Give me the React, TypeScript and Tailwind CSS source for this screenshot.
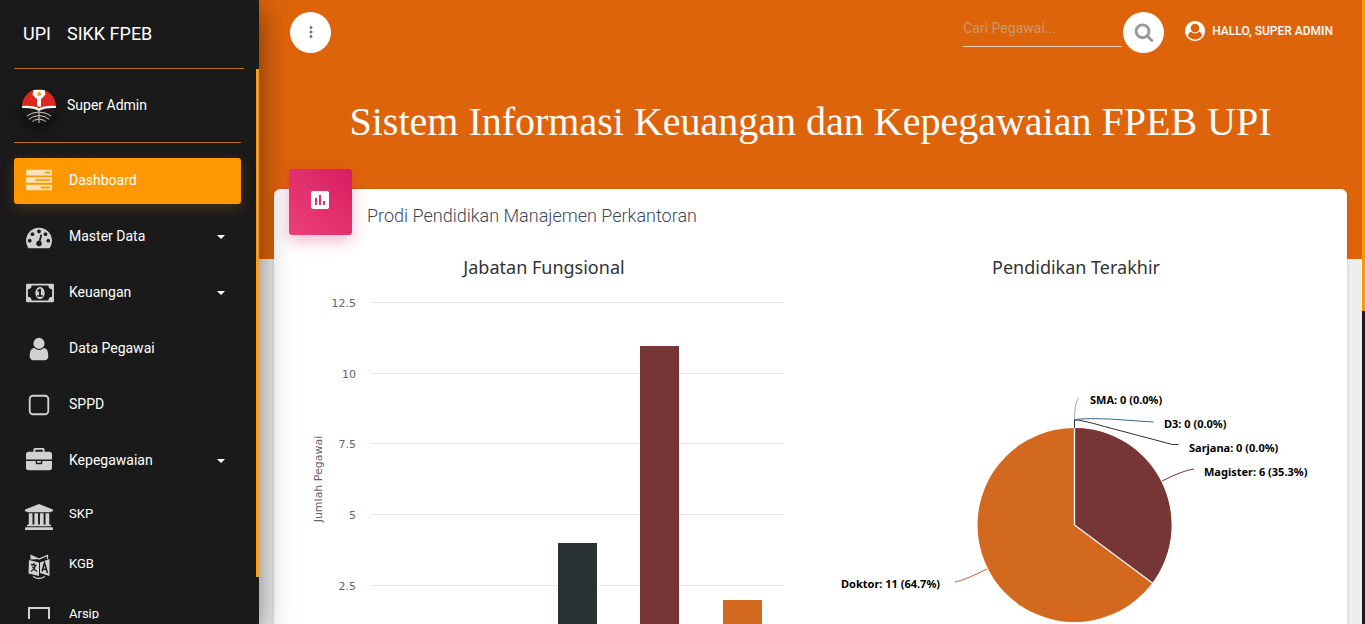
import React from 'react';
import { MdAssessment, MdMoreVert } from 'react-icons/md';

const PATHS = {
  tasks:
    'M1024 1408h640v-128h-640v128zm-384-512h1024v-128h-1024v128zm640-512h384v-128h-384v128zm512 832v256q0 26-19 45t-45 19h-1664q-26 0-45-19t-19-45v-256q0-26 19-45t45-19h1664q26 0 45 19t19 45zm0-512v256q0 26-19 45t-45 19h-1664q-26 0-45-19t-19-45v-256q0-26 19-45t45-19h1664q26 0 45 19t19 45zm0-512v256q0 26-19 45t-45 19h-1664q-26 0-45-19t-19-45v-256q0-26 19-45t45-19h1664q26 0 45 19t19 45z',
  gauge:
    'M384 1152q0-53-37.5-90.5t-90.5-37.5-90.5 37.5-37.5 90.5 37.5 90.5 90.5 37.5 90.5-37.5 37.5-90.5zm192-448q0-53-37.5-90.5t-90.5-37.5-90.5 37.5-37.5 90.5 37.5 90.5 90.5 37.5 90.5-37.5 37.5-90.5zm428 481l101-382q6-26-7.5-48.5t-38.5-29.5-48 6.5-30 39.5l-101 382q-60 5-107 43.5t-63 98.5q-20 77 20 146t117 89 146-20 89-117q16-60-6-117t-72-91zm660-33q0-53-37.5-90.5t-90.5-37.5-90.5 37.5-37.5 90.5 37.5 90.5 90.5 37.5 90.5-37.5 37.5-90.5zm-640-640q0-53-37.5-90.5t-90.5-37.5-90.5 37.5-37.5 90.5 37.5 90.5 90.5 37.5 90.5-37.5 37.5-90.5zm448 192q0-53-37.5-90.5t-90.5-37.5-90.5 37.5-37.5 90.5 37.5 90.5 90.5 37.5 90.5-37.5 37.5-90.5zm320 448q0 261-141 483-19 29-54 29h-1402q-35 0-54-29-141-221-141-483 0-182 71-348t191-286 286-191 348-71 348 71 286 191 191 286 71 348z',
  money:
    'M768 1152h384v-96h-128v-448h-114l-148 137 77 80q42-37 55-57h2v288h-128v96zm512-256q0 70-21 142t-59.5 134-101.5 101-138 39-138-39-101.5-101-59.5-134-21-142 21-142 59.5-134 101.5-101 138-39 138 39 101.5 101 59.5 134 21 142zm512 256v-512q-106 0-181-75t-75-181h-1152q0 106-75 181t-181 75v512q106 0 181 75t75 181h1152q0-106 75-181t181-75zm128-832v1152q0 26-19 45t-45 19h-1792q-26 0-45-19t-19-45v-1152q0-26 19-45t45-19h1792q26 0 45 19t19 45z',
  user: 'M1536 1399q0 109-62.5 187t-150.5 78h-854q-88 0-150.5-78t-62.5-187q0-85 8.5-160.5t31.5-152 58.5-131 94-89 134.5-34.5q131 128 313 128t313-128q76 0 134.5 34.5t94 89 58.5 131 31.5 152 8.5 160.5zm-256-887q0 159-112.5 271.5t-271.5 112.5-271.5-112.5-112.5-271.5 112.5-271.5 271.5-112.5 271.5 112.5 112.5 271.5z',
  square:
    'M1312 320h-832q-66 0-113 47t-47 113v832q0 66 47 113t113 47h832q66 0 113-47t47-113v-832q0-66-47-113t-113-47zm288 160v832q0 119-84.5 203.5t-203.5 84.5h-832q-119 0-203.5-84.5t-84.5-203.5v-832q0-119 84.5-203.5t203.5-84.5h832q119 0 203.5 84.5t84.5 203.5z',
  briefcase:
    'M640 256h512v-128h-512v128zm1152 640v480q0 66-47 113t-113 47h-1472q-66 0-113-47t-47-113v-480h672v160q0 26 19 45t45 19h320q26 0 45-19t19-45v-160h672zm-768 0v128h-256v-128h256zm768-480v384h-1792v-384q0-66 47-113t113-47h352v-160q0-40 28-68t68-28h576q40 0 68 28t28 68v160h352q66 0 113 47t47 113z',
  bank: 'M960 0l960 384v128h-128q0 26-20.5 45t-48.5 19h-1526q-28 0-48.500-19t-20.500-45h-128v-128zm-704 640h256v768h128v-768h256v768h128v-768h256v768h128v-768h256v768h59q28 0 48.500 19t20.500 45v64h-1664v-64q0-26 20.500-45t48.500-19h59v-768zm1595 960q28 0 48.500 19t20.500 45v128h-1920v-128q0-26 20.500-45t48.500-19h1782z',
  search:
    'M1216 832q0-185-131.500-316.500t-316.500-131.500-316.500 131.500-131.500 316.500 131.500 316.500 316.500 131.500 316.500-131.500 131.500-316.500zm512 832q0 52-38 90t-90 38q-54 0-90-38l-343-342q-179 124-399 124-143 0-273.500-55.500t-225-150-150-225-55.500-273.500 55.500-273.500 150-225 225-150 273.500-55.500 273.500 55.500 225 150 150 225 55.500 273.500q0 220-124 399l343 343q37 37 37 90z',
  account:
    'M1523 1339q-22-155-87.500-257.500t-184.500-118.500q-67 74-159.500 115.500t-195.500 41.500-195.500-41.500-159.500-115.500q-119 16-184.500 118.500t-87.500 257.500q106 150 271 237.500t356 87.500 356-87.500 271-237.500zm-243-699q0-159-112.500-271.500t-271.500-112.500-271.500 112.500-112.500 271.500 112.500 271.500 271.500 112.500 271.500-112.500 112.500-271.500zm512 256q0 182-71 347.500t-190.500 286-285.500 191.500-349 71q-182 0-348-71t-286-191-191-286-71-348 71-348 191-286 286-191 348-71 348 71 286 191 191 286 71 348z',
};

type GlyphName = keyof typeof PATHS;

function Glyph({ name, className, box = '0 0 1792 1792' }: { name: GlyphName; className: string; box?: string }) {
  return (
    <svg viewBox={box} className={className} fill="currentColor" aria-hidden="true">
      <path d={PATHS[name]} />
    </svg>
  );
}

function LanguageIcon() {
  return (
    <svg viewBox="0 0 26 26" className="ml-px size-[26px]" aria-hidden="true">
      <path d="M3 6 13 8.500v13.500L2.500 19.500z" fill="currentColor" />
      <path d="M14 8.500 23.500 5V22L14 19z" fill="currentColor" />
      <path d="M5 5.500V1.500l8 3.500 8.500-3.500V5" fill="none" stroke="currentColor" strokeWidth="1.200" />
      <path d="M5 1.500 13 5 5.500 5.500z" fill="currentColor" />
      <path d="M5 10.500l5.500 1M8 9v2.500M9.500 11.500Q8.500 15.500 5 17.500M6.500 12.500q1.500 3.500 4.500 5" fill="none" stroke="#1a1a1a" strokeWidth="1.300" />
      <path d="M16 17.500 18.500 9l3 10M17 15l3.800.8" fill="none" stroke="#1a1a1a" strokeWidth="1.500" />
      <path d="M7 22.500q5.500 4 12 0" fill="none" stroke="currentColor" strokeWidth="1.300" />
    </svg>
  );
}

function ArchiveIcon() {
  return (
    <svg viewBox="0 0 26 26" className="ml-px size-[26px]" aria-hidden="true">
      <path d="M3 24V4h20v20" fill="none" stroke="currentColor" strokeWidth="2" />
    </svg>
  );
}

function Emblem() {
  return (
    <svg viewBox="0 0 34 34" className="size-[34px] rounded-full shadow-[0_6px_14px_rgba(0,0,0,0.5)]" aria-hidden="true">
      <path d="M0 17a17 17 0 0 1 34 0v.5Q22 16.500 17 20 12 16.500 0 17.500z" fill="#dc2620" />
      <path d="M0 17q12-1 17 2.500Q22 16 34 17v2q-12-.5-17 3Q12 18.500 0 19z" fill="#fff" />
      <path d="M11.500 1h11l1 4.500-3.500 4h-1v8h-4v-8h-1l-3.500-4z" fill="#fff" />
      <circle cx="17" cy="5" r="2" fill="#f5a623" />
      <path d="M17 22v12M5 27q4-3.500 12-4 8 .5 12 4M6 31q4-4 11-4.500 7 .5 11 4.500M9 33.500q3-3 8-3.500 5 .5 8 3.500" fill="none" stroke="#cfc8bc" strokeWidth="1" />
    </svg>
  );
}

const MENU: { label: string; icon: React.ReactNode; active?: boolean; sub?: boolean }[] = [
  { label: 'Dashboard', icon: <Glyph name="tasks" className="size-[26px]" />, active: true },
  { label: 'Master Data', icon: <Glyph name="gauge" className="size-[26px]" />, sub: true },
  { label: 'Keuangan', icon: <Glyph name="money" box="0 0 1920 1792" className="h-[26px] w-7" />, sub: true },
  { label: 'Data Pegawai', icon: <Glyph name="user" className="size-[26px]" /> },
  { label: 'SPPD', icon: <Glyph name="square" className="size-[26px]" /> },
  { label: 'Kepegawaian', icon: <Glyph name="briefcase" className="size-[26px]" />, sub: true },
];

const SMALL_MENU = [
  { label: 'SKP', icon: <Glyph name="bank" box="0 0 1920 1792" className="h-[26px] w-7" /> },
  { label: 'KGB', icon: <LanguageIcon /> },
  { label: 'Arsip', icon: <ArchiveIcon /> },
];

function Sidebar() {
  return (
    <aside className="relative z-10 flex w-[259px] shrink-0 flex-col bg-[#1a1a1a] text-white shadow-[0_10px_30px_rgba(0,0,0,0.5)]">
      <a href="#" className="mr-[15px] ml-[14px] flex h-[69px] shrink-0 items-center gap-4 border-b border-[#c26d17] pl-[9px] text-lg">
        <span>UPI</span>
        <span>SIKK FPEB</span>
      </a>
      <div className="flex min-h-0 flex-1">
        <div className="min-w-0 flex-1 overflow-hidden pr-[15px] pl-[14px]">
          <a href="#" className="flex h-[74px] items-center gap-[11px] border-b border-[#c26d17] pl-2 text-sm">
            <Emblem />
            <span className="pb-0.5">Super Admin</span>
          </a>
          <nav className="mt-[15px] flex flex-col gap-[10px] text-sm">
            {MENU.map((item) => (
              <a
                key={item.label}
                href="#"
                className={
                  item.active
                    ? 'flex h-[46px] items-center rounded-[3px] bg-[#ff9800] pl-3 shadow-[0_4px_14px_rgba(255,152,0,0.2)]'
                    : 'flex h-[46px] items-center rounded-[3px] pl-3'
                }
              >
                <span className={item.active ? 'w-[43px] text-[#ffe3b8]' : 'w-[43px] text-[#d1d1d1]'}>{item.icon}</span>
                <span className="-mt-0.5 flex-1">{item.label}</span>
                {item.sub && <span className="mr-4 border-x-4 border-t-4 border-x-transparent border-t-white" />}
              </a>
            ))}
            {SMALL_MENU.map((item) => (
              <a key={item.label} href="#" className="flex h-10 items-center pl-[11px] text-[13px]">
                <span className="w-11 pt-1.5 text-[#d1d1d1]">{item.icon}</span>
                <span>{item.label}</span>
              </a>
            ))}
          </nav>
        </div>
        <div className="w-[3px] shrink-0">
          <div className="h-[508px] bg-[#f89c1c]" />
        </div>
      </div>
      <div className="h-[5px] shrink-0" />
    </aside>
  );
}

const TICKS = ['12.5', '10', '7.5', '5', '2.5'];
const BARS = [
  { x: 269, value: 4, color: '#2a3132' },
  { x: 351, value: 11, color: '#763636' },
  { x: 434, value: 2, color: '#d2691e' },
];

function BarChart() {
  const base = 406;
  return (
    <svg viewBox="0 0 511 440" className="h-[440px] w-full font-['DejaVu_Sans',sans-serif] text-[11px]" role="img" aria-label="Jabatan Fungsional">
      <text x="255" y="24" textAnchor="middle" fill="#333" className="font-['Noto_Sans','DejaVu_Sans',sans-serif] text-lg">
        Jabatan Fungsional
      </text>
      {TICKS.map((tick, i) => {
        const y = Math.round(52 + i * 70.7);
        return (
          <g key={tick}>
            <path d={`M82 ${y + 0.5}H495`} stroke="#e6e6e6" />
            <text x="67" y={y + 5} textAnchor="end" fill="#666">
              {tick}
            </text>
          </g>
        );
      })}
      <path d={`M82 ${base + 0.5}H495`} stroke="#ccd6eb" />
      <text transform="translate(33 229) rotate(-90)" textAnchor="middle" fill="#666">
        Jumlah Pegawai
      </text>
      {BARS.map((bar) => {
        const height = Math.round(bar.value * 28.2);
        return <rect key={bar.x} x={bar.x} y={base - height} width="39" height={height} fill={bar.color} />;
      })}
    </svg>
  );
}

const LABELS = [
  { text: 'SMA: 0 (0.0%)', x: 269, y: 154 },
  { text: 'D3: 0 (0.0%)', x: 343, y: 178 },
  { text: 'Sarjana: 0 (0.0%)', x: 368, y: 202 },
  { text: 'Magister: 6 (35.3%)', x: 383, y: 226 },
  { text: 'Doktor: 11 (64.7%)', x: 20, y: 338 },
];

function PieChart() {
  return (
    <svg viewBox="0 0 511 440" className="h-[440px] w-full font-['Noto_Sans',sans-serif] text-[11px]" role="img" aria-label="Pendidikan Terakhir">
      <text x="255" y="24" textAnchor="middle" fill="#333" className="text-lg">
        Pendidikan Terakhir
      </text>
      <circle cx="253.500" cy="275" r="97" fill="#d2691e" />
      <path d="M253.500 275V178A97 97 0 0 1 331.200 333z" fill="#763636" />
      <path d="M253.500 177V275L332 333.500" fill="none" stroke="#fff" strokeWidth="1.300" />
      <path d="M253.500 178v-8q0-17 4-22" fill="none" stroke="#90afc5" />
      <path d="M253.500 170q4-2 35-1l44 3" fill="none" stroke="#336b87" />
      <path d="M253.500 178v-8q6-.5 30 6.500l68 18h6" fill="none" stroke="#2a3132" />
      <path d="M341 231q22-11 32-12" fill="none" stroke="#763636" />
      <path d="M166 319q-22 11-32 13" fill="none" stroke="#cb6040" />
      {LABELS.map((label) => (
        <text key={label.text} x={label.x} y={label.y} className="font-bold" fill="#000">
          {label.text}
        </text>
      ))}
    </svg>
  );
}

export default function App() {
  return (
    <div className="flex h-screen overflow-hidden bg-[#eee] font-[Roboto,sans-serif]">
      <Sidebar />
      <div className="flex min-w-0 flex-1 flex-col overflow-hidden">
        <div className="h-[259px] shrink-0 bg-[#de640b] text-white">
          <header className="flex h-16 items-center pr-[29px] pl-[31px]">
            <button type="button" aria-label="Menu" className="flex size-[41px] items-center justify-center rounded-full bg-white text-[#777]">
              <MdMoreVert className="size-[18px]" />
            </button>
            <form className="ml-auto flex items-center gap-px">
              <input
                type="text"
                aria-label="Cari Pegawai"
                placeholder="Cari Pegawai..."
                className="h-[29px] w-[159px] border-b border-[#f3d5bd] bg-transparent pb-2 text-sm outline-none placeholder:text-[#c9986f]"
              />
              <button type="button" aria-label="Cari" className="flex size-[41px] items-center justify-center rounded-full bg-white text-[#999]">
                <Glyph name="search" className="size-5" />
              </button>
            </form>
            <a href="#" className="ml-[21px] flex items-center gap-[7px] pb-0.5 text-xs font-medium">
              <Glyph name="account" className="size-5" />
              <span>HALLO, SUPER ADMIN</span>
            </a>
          </header>
          <h1 className="mt-[30px] text-center font-['Liberation_Serif',serif] text-[40px] leading-[56px]">
            Sistem Informasi Keuangan dan Kepegawaian FPEB UPI
          </h1>
        </div>
        <main className="-mt-[70px] px-[15px]">
          <section className="rounded-md bg-white px-[15px] shadow-[0_1px_4px_rgba(0,0,0,0.14)]">
            <div className="flex gap-[15px]">
              <div className="-mt-5 flex h-[66px] w-[63px] items-center justify-center rounded-[3px] bg-linear-to-tr from-[#ec407a] to-[#d81b60] text-white shadow-[0_6px_16px_rgba(216,27,96,0.3)]">
                <MdAssessment className="mr-px mb-1 size-6" />
              </div>
              <h2 className="mt-[13px] text-lg leading-[27px] font-light text-[#3c4858]">Prodi Pendidikan Manajemen Perkantoran</h2>
            </div>
            <div className="mt-[15px] grid grid-cols-2 gap-[21px]">
              <BarChart />
              <PieChart />
            </div>
          </section>
        </main>
      </div>
      <div className="w-[3px] shrink-0 bg-[#1a1a1a]">
        <div className="h-[311px] bg-[#ff9800]" />
      </div>
    </div>
  );
}
